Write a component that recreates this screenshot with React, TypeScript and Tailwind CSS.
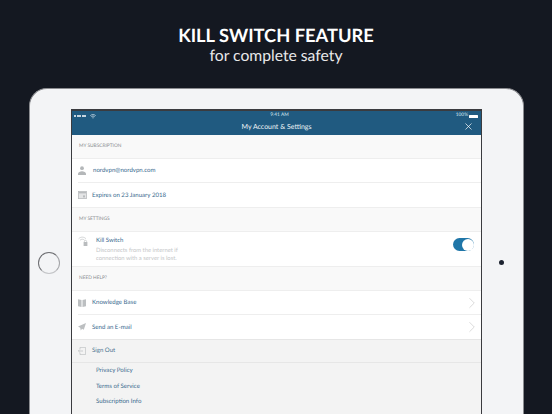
import { X, ChevronRight } from "lucide-react";
import type { ReactNode } from "react";

function SectionLabel({ children }: { children: ReactNode }) {
  return (
    <div className="h-6 flex items-center pl-[7px] pt-[1px] bg-[#f9f9f9] border-b border-[#eeeeee] text-[4.8px] text-[#8a8e91]">
      {children}
    </div>
  );
}

function Row({ icon, label, chevron, gap = "w-[15px]", line = true }: { icon: ReactNode; label: string; chevron?: boolean; gap?: string; line?: boolean }) {
  return (
    <div className="h-6 pl-[6px] bg-white">
      <div className={`h-full flex items-center ${line ? "border-b border-[#eeeeee]" : ""}`}>
        <div className={`${gap} shrink-0 flex items-center`}>{icon}</div>
        <span className="flex-1 pt-[1px] text-[6.1px] text-[#3a6b8f]">{label}</span>
        {chevron && <ChevronRight className="w-[18px] h-[18px] text-[#c8c8c8]" strokeWidth={0.9} />}
      </div>
    </div>
  );
}

const UserIcon = (
  <svg width="8" height="9" viewBox="0 0 8 9" className="text-[#b4b7b9]" fill="currentColor">
    <circle cx="4" cy="2.2" r="1.9" />
    <path d="M0 9V7.6C0 6.4 2.2 5.2 4 5.2S8 6.4 8 7.6V9Z" />
  </svg>
);

const CalendarIcon = (
  <svg width="9" height="8" viewBox="0 0 9 8" className="text-[#b9bcbe]">
    <rect x="0.4" y="0.4" width="8" height="7.2" fill="#e4e5e6" stroke="currentColor" strokeWidth="0.8" />
    <rect x="1" y="1" width="7" height="1.4" fill="currentColor" />
    <rect x="5" y="4.4" width="2" height="2" fill="currentColor" />
  </svg>
);

const BookIcon = (
  <svg width="8" height="8" viewBox="0 0 8 8" fill="#bcbfc1">
    <path d="M0 0.2L3.5 1V8L0 7.2Z" />
    <path d="M8 0.2L4.5 1V8L8 7.2Z" />
  </svg>
);

const PlaneIcon = (
  <svg width="8" height="8" viewBox="0 0 8 8" fill="#bcbfc1">
    <path d="M8 0L0 3.6L2.2 4.8L2.8 7.6L4 5.8L5.8 6.8Z" />
  </svg>
);

const SignOutIcon = (
  <svg width="8" height="8" viewBox="0 0 8 8" fill="none" stroke="#b4b7b9" strokeWidth="0.6">
    <path d="M2 2.2V0.4H7.6V7.6H2V5.8" />
    <path d="M5 4H0.4M1.8 2.6L0.4 4L1.8 5.4" />
  </svg>
);

const WifiLockIcon = (
  <svg width="11" height="11" viewBox="0 0 11 11" fill="none" stroke="#b9bcbe" strokeWidth="0.6">
    <path d="M0.6 2.8C2.6 0.6 6 0.6 8 2.8" />
    <path d="M2 4.2C3.4 2.9 5.2 2.9 6.6 4.2" />
    <rect x="5.6" y="6" width="3.8" height="4" fill="#b9bcbe" stroke="none" />
    <path d="M6.4 6V5.2C6.4 4 8.6 4 8.6 5.2V6" />
  </svg>
);

const WifiIcon = (
  <svg width="6" height="5" viewBox="0 0 6 5" fill="none" stroke="#dfe9f0" strokeWidth="0.7">
    <path d="M0.3 1.6C1.8 0.2 4.2 0.2 5.7 1.6" />
    <path d="M1.3 2.7C2.2 1.9 3.8 1.9 4.7 2.7" />
    <path d="M3 4.6L2.2 3.7C2.6 3.4 3.4 3.4 3.8 3.7Z" fill="#dfe9f0" stroke="none" />
  </svg>
);

export default function App() {
  return (
    <div className="w-[552px] h-[414px] overflow-hidden bg-[#141821] font-['Lato',sans-serif] [text-rendering:geometricPrecision]">
      <div className="pt-[24px] h-[88px] text-center text-white">
        <h1 className="text-[18.3px] leading-[22px] font-bold">KILL SWITCH FEATURE</h1>
        <p className="text-[15.7px] leading-[22px] mt-[-1px] text-[#e9e9ea]">for complete safety</p>
      </div>

      <div className="ml-[29px] w-[495px] h-[350px] rounded-t-[18px] bg-[#f3f4f6] border-t border-x border-[#8b8c90] flex">
        <div className="w-[41px] shrink-0 flex justify-center items-center pb-[2px] pr-[4px]">
          <div className="w-[22px] h-[22px] rounded-full border-[1.5px] border-[#6d6e72] border-r-[#a3a4a8] border-b-[#c4c5c8]" />
        </div>

        <div className="w-[411px] shrink-0 mt-[20px] border-x border-t-2 border-x-[#3a3b3f] border-t-[#3a3b3f] bg-[#f3f3f3]">
          <div className="h-[24px] bg-[#205a80] text-white relative">
            <div className="h-[10px] flex items-center justify-between pl-[2px] pr-[3px] text-[4.8px] text-[#dfe9f0]">
              <div className="flex items-center w-[40px]">
                <div className="flex gap-[0.5px]">
                  <span className="w-[2px] h-[2px] rounded-full bg-white" />
                  <span className="w-[2px] h-[2px] rounded-full bg-white" />
                  <span className="w-[2px] h-[2px] rounded-full bg-white" />
                  <span className="w-[2px] h-[2px] rounded-full bg-white" />
                  <span className="w-[2px] h-[2px] rounded-full bg-white" />
                </div>
                <div className="ml-[4px]">{WifiIcon}</div>
              </div>
              <span className="pl-[7px]">9:41 AM</span>
              <div className="flex items-center justify-end gap-[1px] w-[40px]">
                <span>100%</span>
                <span className="w-[9px] h-[3px] bg-white rounded-[0.5px]" />
              </div>
            </div>
            <div className="text-center text-[7px] leading-[12px] text-[#eef3f6]">My Account &amp; Settings</div>
            <X className="absolute right-[7px] top-[10px] w-[11px] h-[11px] text-white" strokeWidth={1.5} />
          </div>

          <SectionLabel>MY SUBSCRIPTION</SectionLabel>
          <Row icon={UserIcon} label="nordvpn@nordvpn.com" />
          <Row icon={CalendarIcon} label="Expires on 23 January 2018" gap="w-[14px]" line={false} />

          <div className="border-t border-[#eeeeee]">
            <SectionLabel>MY SETTINGS</SectionLabel>
          </div>
          <div className="h-[35px] flex bg-white border-b border-[#eeeeee] pl-[6px] pr-[7px]">
            <div className="w-[18px] shrink-0 pt-[4px]">{WifiLockIcon}</div>
            <div className="flex-1 pt-[4px]">
              <div className="text-[6px] leading-[10px] text-[#3a6b8f]">Kill Switch</div>
              <div className="text-[5.85px] leading-[7.5px] mt-[1px] text-[#c4c6c8]">
                Disconnects from the internet if
                <br />
                connection with a server is lost.
              </div>
            </div>
            <div className="w-[21px] h-[13px] mt-[6px] rounded-full bg-[#1f76a8] flex justify-end items-center pr-[0.5px]">
              <div className="w-[12px] h-[12px] rounded-full bg-white" />
            </div>
          </div>

          <SectionLabel>NEED HELP?</SectionLabel>
          <Row icon={BookIcon} label="Knowledge Base" chevron gap="w-[14px]" />
          <Row icon={PlaneIcon} label="Send an E-mail" chevron gap="w-[14px]" line={false} />

          <div className="h-[24px] flex items-center pl-[6px] border-y border-[#e6e6e6] bg-[#f3f3f3]">
            <div className="w-[14px] shrink-0">{SignOutIcon}</div>
            <span className="text-[6.1px] text-[#4a7391]">Sign Out</span>
          </div>
          <div className="pl-[24px] flex flex-col text-[6.1px] leading-[15.7px] text-[#3a6b8f]">
            <span>Privacy Policy</span>
            <span>Terms of Service</span>
            <span>Subscription Info</span>
          </div>
        </div>

        <div className="flex-1 flex justify-center pt-[171px] pr-[3px]">
          <div className="w-[5px] h-[5px] rounded-full bg-[#1c2230]" />
        </div>
      </div>
    </div>
  );
}
